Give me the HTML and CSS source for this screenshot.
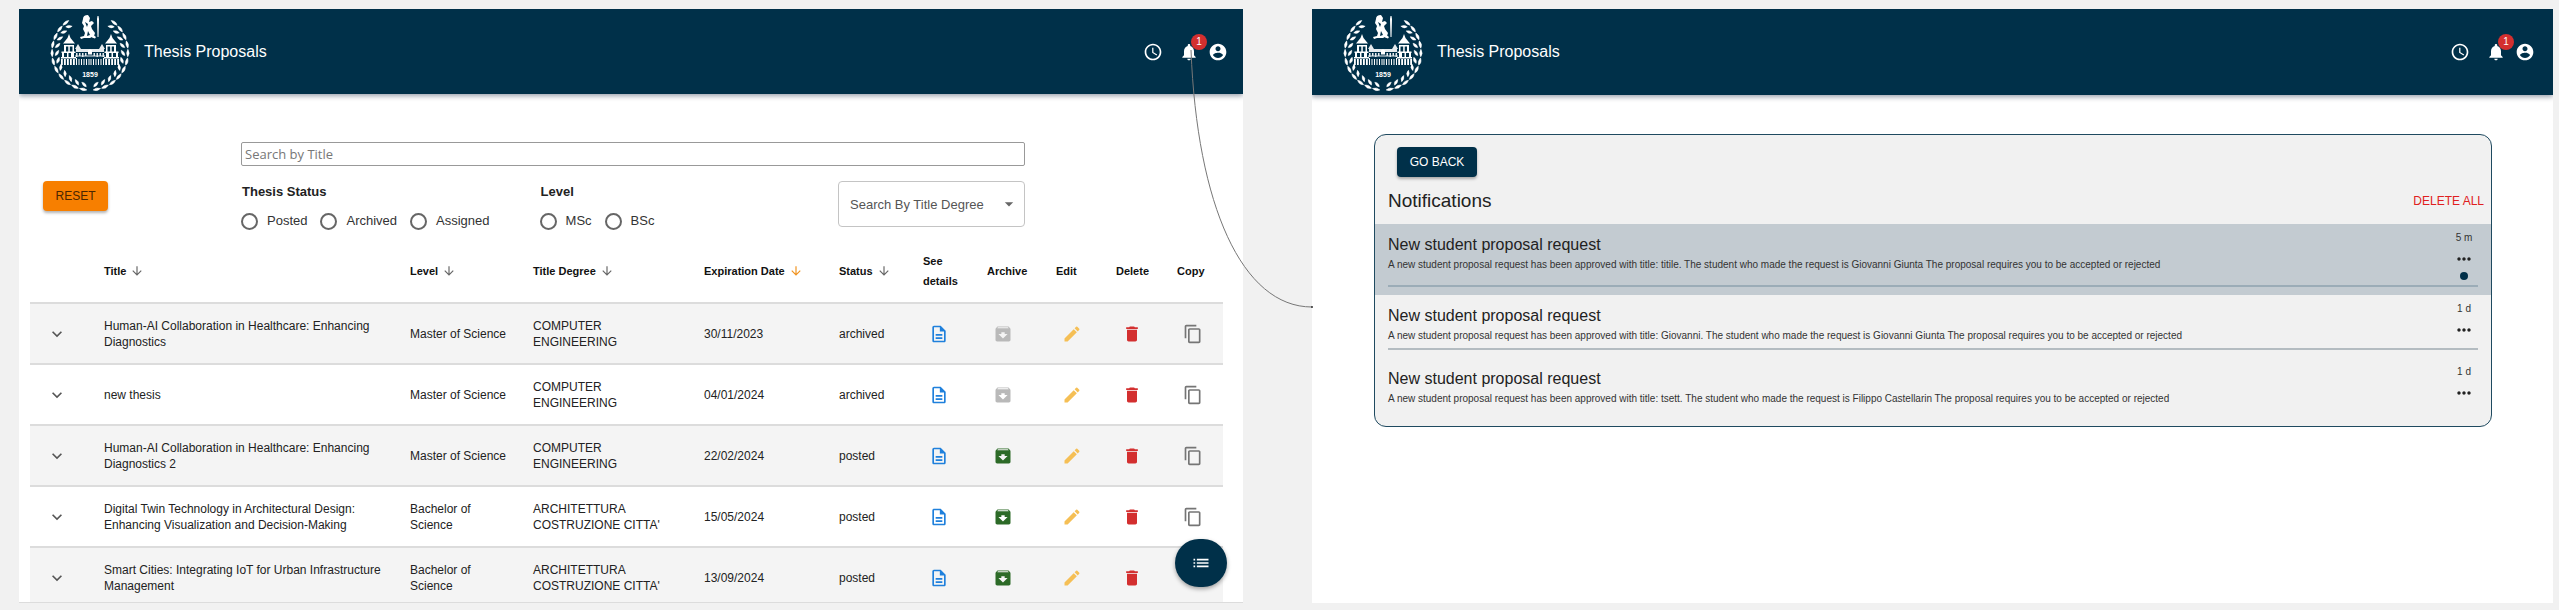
FILE: index.html
```
<!DOCTYPE html>
<html lang="en">
<head>
<meta charset="utf-8">
<title>Thesis Proposals</title>
<link rel="stylesheet" href="styles.css">
</head>
<body>
<svg class="sprite" aria-hidden="true">
  <symbol id="clock" viewBox="0 0 24 24"><path d="M11.99 2C6.47 2 2 6.48 2 12s4.47 10 9.99 10C17.52 22 22 17.52 22 12S17.52 2 11.99 2zM12 20c-4.42 0-8-3.58-8-8s3.58-8 8-8 8 3.58 8 8-3.58 8-8 8z"/><path d="M12.5 7H11v6l5.25 3.15.75-1.23-4.5-2.67z"/></symbol>
  <symbol id="bell" viewBox="0 0 24 24"><path d="M12 22c1.1 0 2-.9 2-2h-4c0 1.1.89 2 2 2zm6-6v-5c0-3.07-1.64-5.64-4.5-6.32V4c0-.83-.67-1.5-1.5-1.5s-1.5.67-1.5 1.5v.68C7.63 5.36 6 7.92 6 11v5l-2 2v1h16v-1l-2-2z"/></symbol>
  <symbol id="account" viewBox="0 0 24 24"><path d="M12 2C6.48 2 2 6.48 2 12s4.48 10 10 10 10-4.48 10-10S17.52 2 12 2zm0 3c1.66 0 3 1.34 3 3s-1.34 3-3 3-3-1.34-3-3 1.34-3 3-3zm0 14.2c-2.5 0-4.71-1.28-6-3.22.03-1.99 4-3.08 6-3.08 1.99 0 5.97 1.09 6 3.08-1.29 1.94-3.5 3.22-6 3.22z"/></symbol>
  <symbol id="arrow" viewBox="0 0 24 24"><path d="m20 12-1.41-1.41L13 16.17V4h-2v12.17l-5.58-5.59L4 12l8 8 8-8z"/></symbol>
  <symbol id="chevron" viewBox="0 0 24 24"><path d="M7.41 8.59 12 13.17l4.59-4.58L18 10l-6 6-6-6 1.41-1.41z"/></symbol>
  <symbol id="doc" viewBox="0 0 24 24"><path d="M8 16h8v2H8zm0-4h8v2H8zm6-10H6c-1.1 0-2 .9-2 2v16c0 1.1.89 2 1.99 2H18c1.1 0 2-.9 2-2V8l-6-6zm4 18H6V4h7v5h5v11z"/></symbol>
  <symbol id="archive" viewBox="0 0 24 24"><path d="M20.54 5.23l-1.39-1.68C18.88 3.21 18.47 3 18 3H6c-.47 0-.88.21-1.16.55L3.46 5.23C3.17 5.57 3 6.02 3 6.5V19c0 1.1.9 2 2 2h14c1.1 0 2-.9 2-2V6.5c0-.48-.17-.93-.46-1.27zM12 17.5L6.5 12H10v-2h4v2h3.5L12 17.5zM5.12 5l.81-1h12l.94 1H5.12z"/></symbol>
  <symbol id="edit" viewBox="0 0 24 24"><path d="M3 17.25V21h3.75L17.81 9.94l-3.75-3.75L3 17.25zM20.71 7.04c.39-.39.39-1.02 0-1.41l-2.34-2.34a.9959.9959 0 0 0-1.41 0l-1.83 1.83 3.75 3.75 1.83-1.83z"/></symbol>
  <symbol id="trash" viewBox="0 0 24 24"><path d="M6 19c0 1.1.9 2 2 2h8c1.1 0 2-.9 2-2V7H6v12zM19 4h-3.5l-1-1h-5l-1 1H5v2h14V4z"/></symbol>
  <symbol id="copy" viewBox="0 0 24 24"><path d="M16 1H4c-1.1 0-2 .9-2 2v14h2V3h12V1zm3 4H8c-1.1 0-2 .9-2 2v14c0 1.1.9 2 2 2h11c1.1 0 2-.9 2-2V7c0-1.1-.9-2-2-2zm0 16H8V7h11v14z"/></symbol>
  <symbol id="list" viewBox="0 0 24 24"><path d="M3 13h2v-2H3v2zm0 4h2v-2H3v2zm0-8h2V7H3v2zm4 4h14v-2H7v2zm0 4h14v-2H7v2zM7 7v2h14V7H7z"/></symbol>
  <symbol id="more" viewBox="0 0 24 24"><path d="M6 10c-1.1 0-2 .9-2 2s.9 2 2 2 2-.9 2-2-.9-2-2-2zm12 0c-1.1 0-2 .9-2 2s.9 2 2 2 2-.9 2-2-.9-2-2-2zm-6 0c-1.1 0-2 .9-2 2s.9 2 2 2 2-.9 2-2-.9-2-2-2z"/></symbol>
  <symbol id="caret" viewBox="0 0 24 24"><path d="m7 10 5 5 5-5z"/></symbol>
  <symbol id="leaf" viewBox="0 0 80 76" overflow="visible"><path d="M41.500 76q-3.500 2.500-7.500-.5 4-2 7.500.5zM40.500 73q-3.500 0-5-4 4.500 0 5 4z" stroke="currentColor" stroke-width=".5"/></symbol>
  <symbol id="branch" viewBox="0 0 80 76" overflow="visible">
    <g>
      <use href="#leaf" width="80" height="76" transform="rotate(7 40 38)"/>
      <use href="#leaf" width="80" height="76" transform="rotate(20 40 38)"/>
      <use href="#leaf" width="80" height="76" transform="rotate(33 40 38)"/>
      <use href="#leaf" width="80" height="76" transform="rotate(46 40 38)"/>
      <use href="#leaf" width="80" height="76" transform="rotate(59 40 38)"/>
      <use href="#leaf" width="80" height="76" transform="rotate(72 40 38)"/>
      <use href="#leaf" width="80" height="76" transform="rotate(85 40 38)"/>
      <use href="#leaf" width="80" height="76" transform="rotate(98 40 38)"/>
      <use href="#leaf" width="80" height="76" transform="rotate(111 40 38)"/>
      <use href="#leaf" width="80" height="76" transform="rotate(124 40 38)"/>
      <use href="#leaf" width="80" height="76" transform="rotate(137 40 38)"/>
    </g>
  </symbol>
  <symbol id="wing" viewBox="0 0 80 76" overflow="visible">
    <path d="M19 20l-1.500 4-4.500 5.500h12l-4.500-5.500z"/>
    <path d="M14 31h10v1.500H14zM14 32h2v6h-2zM18.300 32h1.500v6h-1.500zM22.500 32H24v6h-1.500zM11.500 37.500h14V39h-14zM12 39h2v5h-2zM17 39h1.500v5H17zM21 39h3v5h-3zM11 43h15v1.500H11z"/>
    <path d="M11 45h1.800v6H11zM14 45h1.800v6H14zM17 45h1.800v6H17zM20 45h1.800v6H20zM23 45h1.800v6H23zM26 44h1v7h-1zM28.500 45h1v6h-1zM31 45h1v6h-1zM33.500 45h1v6h-1zM36 45h1v6h-1zM38.500 45h1v6h-1z"/>
    <path d="M28 30l-3 5h6zM26 35h14v3H26zM26 39h1.500v4H26zM29 39h1.500v3H29zM32 39h1.500v4H32zM35 39h1.500v3H35zM25 41.500h15v1H25z" opacity=".9"/>
  </symbol>
  <symbol id="crest" viewBox="0 0 80 76" overflow="visible">
    <use href="#branch" width="80" height="76"/>
    <use href="#branch" width="80" height="76" transform="matrix(-1 0 0 1 80 0)"/>
    <use href="#wing" width="80" height="76"/>
    <use href="#wing" width="80" height="76" transform="matrix(-1 0 0 1 80 0)"/>
    <path d="M38 36.500q2-2 4 0v4h-4z"/>
    <path d="M33 5q0-4 5-4l2 3-1 4 3-1 2 2-3 3 1 3 3 4-1 3-4 2-6 0-3 1-1-2 4-1 1-3-2-4 1-3-2-3z"/>
    <path d="M47.500 2h1l.5 3-.5 18h-1L47 5zM42 20l4 3-1 1.500-3-1z"/>
    <path d="M35 8l3 2-1 3zM38 17l2 4-3 1z" fill="#003049"/>
  </symbol>
</svg>

<section class="screen screen-list">
  <header class="appbar">
    <svg class="crest" viewBox="0 0 80 76"><use href="#crest"/><text x="40" y="63" text-anchor="middle">1859</text></svg>
    <h1>Thesis Proposals</h1>
    <nav class="appbar-actions">
      <button class="icon-btn" aria-label="Clock"><svg class="i20"><use href="#clock"/></svg></button>
      <button class="icon-btn bell" aria-label="Notifications"><svg class="i20"><use href="#bell"/></svg><span class="badge">1</span></button>
      <button class="icon-btn" aria-label="Account"><svg class="i20"><use href="#account"/></svg></button>
    </nav>
  </header>

  <form class="filters">
    <input class="search" type="text" placeholder="Search by Title" aria-label="Search by Title">
    <button class="btn btn-reset" type="reset">RESET</button>
    <div class="filter-row">
      <fieldset>
        <legend>Thesis Status</legend>
        <div class="radios">
          <label><input type="radio" name="status">Posted</label>
          <label><input type="radio" name="status">Archived</label>
          <label><input type="radio" name="status">Assigned</label>
        </div>
      </fieldset>
      <fieldset>
        <legend>Level</legend>
        <div class="radios">
          <label><input type="radio" name="level">MSc</label>
          <label><input type="radio" name="level">BSc</label>
        </div>
      </fieldset>
      <div class="select">
        <select aria-label="Search By Title Degree"><option>Search By Title Degree</option></select>
        <svg class="i20"><use href="#caret"/></svg>
      </div>
    </div>
  </form>

  <table class="proposals">
    <colgroup><col class="c-expand"><col class="c-title"><col class="c-level"><col class="c-degree"><col class="c-date"><col class="c-status"><col class="c-see"><col class="c-archive"><col class="c-edit"><col class="c-delete"><col class="c-copy"></colgroup>
    <thead>
      <tr>
        <th></th>
        <th><span class="sort">Title<svg><use href="#arrow"/></svg></span></th>
        <th><span class="sort">Level<svg><use href="#arrow"/></svg></span></th>
        <th><span class="sort">Title Degree<svg><use href="#arrow"/></svg></span></th>
        <th><span class="sort active">Expiration Date<svg><use href="#arrow"/></svg></span></th>
        <th><span class="sort">Status<svg><use href="#arrow"/></svg></span></th>
        <th>See details</th>
        <th>Archive</th>
        <th>Edit</th>
        <th>Delete</th>
        <th>Copy</th>
      </tr>
    </thead>
    <tbody>
      <tr>
        <td><button class="expand" aria-label="Expand"><svg class="i20"><use href="#chevron"/></svg></button></td>
        <td>Human-AI Collaboration in Healthcare: Enhancing Diagnostics</td><td class="level">Master of Science</td><td class="degree">COMPUTER ENGINEERING</td><td>30/11/2023</td><td>archived</td>
        <td><button class="act see" aria-label="See details"><svg class="i20"><use href="#doc"/></svg></button></td>
        <td><button class="act archive" disabled aria-label="Archive"><svg class="i20"><use href="#archive"/></svg></button></td>
        <td><button class="act edit" aria-label="Edit"><svg class="i20"><use href="#edit"/></svg></button></td>
        <td><button class="act delete" aria-label="Delete"><svg class="i20"><use href="#trash"/></svg></button></td>
        <td><button class="act copy" aria-label="Copy"><svg class="i20"><use href="#copy"/></svg></button></td>
      </tr>
      <tr>
        <td><button class="expand" aria-label="Expand"><svg class="i20"><use href="#chevron"/></svg></button></td>
        <td>new thesis</td><td class="level">Master of Science</td><td class="degree">COMPUTER ENGINEERING</td><td>04/01/2024</td><td>archived</td>
        <td><button class="act see" aria-label="See details"><svg class="i20"><use href="#doc"/></svg></button></td>
        <td><button class="act archive" disabled aria-label="Archive"><svg class="i20"><use href="#archive"/></svg></button></td>
        <td><button class="act edit" aria-label="Edit"><svg class="i20"><use href="#edit"/></svg></button></td>
        <td><button class="act delete" aria-label="Delete"><svg class="i20"><use href="#trash"/></svg></button></td>
        <td><button class="act copy" aria-label="Copy"><svg class="i20"><use href="#copy"/></svg></button></td>
      </tr>
      <tr>
        <td><button class="expand" aria-label="Expand"><svg class="i20"><use href="#chevron"/></svg></button></td>
        <td>Human-AI Collaboration in Healthcare: Enhancing Diagnostics 2</td><td class="level">Master of Science</td><td class="degree">COMPUTER ENGINEERING</td><td>22/02/2024</td><td>posted</td>
        <td><button class="act see" aria-label="See details"><svg class="i20"><use href="#doc"/></svg></button></td>
        <td><button class="act archive" aria-label="Archive"><svg class="i20"><use href="#archive"/></svg></button></td>
        <td><button class="act edit" aria-label="Edit"><svg class="i20"><use href="#edit"/></svg></button></td>
        <td><button class="act delete" aria-label="Delete"><svg class="i20"><use href="#trash"/></svg></button></td>
        <td><button class="act copy" aria-label="Copy"><svg class="i20"><use href="#copy"/></svg></button></td>
      </tr>
      <tr>
        <td><button class="expand" aria-label="Expand"><svg class="i20"><use href="#chevron"/></svg></button></td>
        <td>Digital Twin Technology in Architectural Design: Enhancing Visualization and Decision-Making</td><td class="level">Bachelor of Science</td><td class="degree">ARCHITETTURA COSTRUZIONE CITTA'</td><td>15/05/2024</td><td>posted</td>
        <td><button class="act see" aria-label="See details"><svg class="i20"><use href="#doc"/></svg></button></td>
        <td><button class="act archive" aria-label="Archive"><svg class="i20"><use href="#archive"/></svg></button></td>
        <td><button class="act edit" aria-label="Edit"><svg class="i20"><use href="#edit"/></svg></button></td>
        <td><button class="act delete" aria-label="Delete"><svg class="i20"><use href="#trash"/></svg></button></td>
        <td><button class="act copy" aria-label="Copy"><svg class="i20"><use href="#copy"/></svg></button></td>
      </tr>
      <tr>
        <td><button class="expand" aria-label="Expand"><svg class="i20"><use href="#chevron"/></svg></button></td>
        <td>Smart Cities: Integrating IoT for Urban Infrastructure Management</td><td class="level">Bachelor of Science</td><td class="degree">ARCHITETTURA COSTRUZIONE CITTA'</td><td>13/09/2024</td><td>posted</td>
        <td><button class="act see" aria-label="See details"><svg class="i20"><use href="#doc"/></svg></button></td>
        <td><button class="act archive" aria-label="Archive"><svg class="i20"><use href="#archive"/></svg></button></td>
        <td><button class="act edit" aria-label="Edit"><svg class="i20"><use href="#edit"/></svg></button></td>
        <td><button class="act delete" aria-label="Delete"><svg class="i20"><use href="#trash"/></svg></button></td>
        <td></td>
      </tr>
    </tbody>
  </table>

  <button class="fab" aria-label="Menu"><svg class="i20"><use href="#list"/></svg></button>
</section>

<section class="screen screen-notes">
  <header class="appbar">
    <svg class="crest" viewBox="0 0 80 76"><use href="#crest"/><text x="40" y="63" text-anchor="middle">1859</text></svg>
    <h1>Thesis Proposals</h1>
    <nav class="appbar-actions">
      <button class="icon-btn" aria-label="Clock"><svg class="i20"><use href="#clock"/></svg></button>
      <button class="icon-btn bell" aria-label="Notifications"><svg class="i20"><use href="#bell"/></svg><span class="badge">1</span></button>
      <button class="icon-btn" aria-label="Account"><svg class="i20"><use href="#account"/></svg></button>
    </nav>
  </header>

  <div class="notes">
    <button class="btn btn-back">GO BACK</button>
    <div class="notes-head">
      <h2>Notifications</h2>
      <button class="delete-all">DELETE ALL</button>
    </div>
    <article class="note unread">
      <div class="note-body">
        <div class="note-text">
          <h3>New student proposal request</h3>
          <p>A new student proposal request has been approved with title: titile. The student who made the request is Giovanni Giunta The proposal requires you to be accepted or rejected</p>
        </div>
        <div class="note-side"><time>5 m</time><button aria-label="More"><svg class="i20"><use href="#more"/></svg></button><span class="dot"></span></div>
      </div>
    </article>
    <article class="note">
      <div class="note-body">
        <div class="note-text">
          <h3>New student proposal request</h3>
          <p>A new student proposal request has been approved with title: Giovanni. The student who made the request is Giovanni Giunta The proposal requires you to be accepted or rejected</p>
        </div>
        <div class="note-side"><time>1 d</time><button aria-label="More"><svg class="i20"><use href="#more"/></svg></button></div>
      </div>
    </article>
    <article class="note">
      <div class="note-body">
        <div class="note-text">
          <h3>New student proposal request</h3>
          <p>A new student proposal request has been approved with title: tsett. The student who made the request is Filippo Castellarin The proposal requires you to be accepted or rejected</p>
        </div>
        <div class="note-side"><time>1 d</time><button aria-label="More"><svg class="i20"><use href="#more"/></svg></button></div>
      </div>
    </article>
  </div>
</section>

<svg class="connector" viewBox="1180 40 140 280" aria-hidden="true">
  <path d="M1191 50C1197 205 1242 307 1312 307"/>
  <circle cx="1312" cy="307" r="1"/>
</svg>
</body>
</html>
```

FILE: styles.css
```
* { box-sizing: border-box; }

body {
  margin: 0;
  height: 100vh;
  padding: 9px 6px 7px 19px;
  display: flex;
  gap: 69px;
  position: relative;
  background: #f1f1f1;
  color: #222;
  font-family: "Liberation Sans", Arial, sans-serif;
  font-size: 13px;
}

button, input, select { font: inherit; color: inherit; }
button { border: 0; padding: 0; background: none; cursor: pointer; }
svg { display: block; fill: currentColor; }
h1, h2, h3, p { margin: 0; font-weight: 400; }

.sprite { position: absolute; width: 0; height: 0; }
.i20 { width: 20px; height: 20px; }

.screen {
  position: relative;
  min-width: 0;
  overflow: hidden;
  background: #fff;
}
.screen-list { flex: 1224 1 0; border-bottom: 1px solid #dcdcdc; }
.screen-notes { flex: 1241 1 0; }

/* App bar */
.appbar {
  display: flex;
  align-items: center;
  height: 85px;
  padding: 0 15px 0 31px;
  background: #003049;
  color: #fff;
  box-shadow: 0 2px 5px rgba(0, 20, 50, .4);
}
.screen-notes .appbar { height: 86px; padding-right: 18px; }
.crest {
  width: 80px;
  height: 76px;
  margin-right: 14px;
  overflow: visible;
  font-size: 7px;
  font-weight: 700;
}
.appbar h1 { font-size: 16px; line-height: 24px; }
.appbar-actions { display: flex; align-items: center; margin-left: auto; }
.icon-btn { position: relative; }
.icon-btn + .icon-btn { margin-left: 9px; }
.icon-btn.bell { margin-left: 16px; }
.badge {
  position: absolute;
  top: -8px;
  left: 12px;
  width: 16px;
  height: 16px;
  border-radius: 50%;
  background: #d32f2f;
  font-size: 10px;
  line-height: 16px;
  text-align: center;
}

/* Filters */
.filters {
  display: grid;
  grid-template-columns: 222fr 784fr 218fr;
  row-gap: 15px;
  padding-top: 48px;
}
.search {
  grid-column: 2;
  height: 24px;
  padding: 0 3px;
  border: 1px solid #999;
  border-radius: 2px;
  background: #fff;
  font-family: "Open Sans", sans-serif;
  font-size: 13px;
}
.search::placeholder { color: #777; opacity: 1; }
.btn {
  height: 30px;
  border-radius: 4px;
  font-size: 12px;
  box-shadow: 0 2px 3px rgba(0, 0, 0, .3);
}
.btn-reset {
  grid-column: 1;
  justify-self: start;
  width: 65px;
  margin-left: 24px;
  background: #f77f00;
  color: #4a2600;
}
.filter-row { display: flex; align-items: flex-start; }
fieldset { margin: 0 50px 0 0; padding: 0; border: 0; }
legend { padding: 0 0 0 1px; font-weight: 700; line-height: 22px; }
.radios { display: flex; gap: 13px; padding-top: 8px; }
.radios label { display: flex; align-items: center; gap: 9px; line-height: 20px; color: #333; }
.radios input {
  appearance: none;
  width: 17px;
  height: 17px;
  margin: 0;
  border: 2px solid #666;
  border-radius: 50%;
}
.select { position: relative; width: 187px; margin-left: auto; }
.select select {
  appearance: none;
  width: 100%;
  height: 46px;
  padding: 0 11px;
  border: 1px solid #c4c4c4;
  border-radius: 4px;
  background: #fff;
  color: #555;
}
.select svg { position: absolute; top: 13px; right: 6px; color: #666; pointer-events: none; }

/* Proposals table */
.proposals {
  width: calc(100% - 31px);
  margin: 8px 20px 0 11px;
  border-spacing: 0;
  table-layout: fixed;
  font-size: 12px;
  line-height: 16px;
}
.c-expand { width: 62px; }
.c-level { width: 123px; }
.c-degree { width: 171px; }
.c-date { width: 135px; }
.c-status { width: 84px; }
.c-see { width: 64px; }
.c-archive { width: 69px; }
.c-edit { width: 60px; }
.c-delete { width: 61px; }
.c-copy { width: 58px; }
.proposals th, .proposals td {
  padding: 0 4px 0 12px;
  border-bottom: 2px solid #dcdcdc;
  text-align: left;
  vertical-align: middle;
}
.proposals th { height: 65px; font-size: 11px; line-height: 20px; color: #111; }
.proposals td { height: 61px; }
.proposals td.level { padding-right: 12px; }
.proposals td.degree { padding-right: 30px; }
.proposals tbody tr:nth-child(odd) { background: #f4f4f4; }
.sort { display: inline-flex; align-items: center; gap: 4px; white-space: nowrap; }
.sort svg { width: 14px; height: 14px; color: #666; }
.sort.active svg { color: #f0921e; }
.expand { display: block; margin-left: 5px; color: #555; }
.act { display: block; margin-left: 6px; }
.see { color: #1f80dc; }
.archive { color: #2c6a27; }
.archive:disabled { color: #b9b9b9; }
.edit { color: #f5bf55; }
.delete { color: #d32f2f; }
.copy { color: #757575; }

.fab {
  position: absolute;
  right: 16px;
  bottom: 15px;
  display: grid;
  place-items: center;
  width: 52px;
  height: 48px;
  border-radius: 24px;
  background: #003049;
  color: #fff;
  box-shadow: 0 2px 4px rgba(0, 0, 0, .35);
}

/* Notifications */
.notes {
  margin: 39px 61px 0 62px;
  padding: 12px 0 5px;
  overflow: hidden;
  border: 1px solid #1f4a60;
  border-radius: 12px;
  background: #f1f1f1;
}
.btn-back { display: block; width: 80px; margin-left: 22px; background: #003049; color: #fff; }
.notes-head {
  display: flex;
  align-items: center;
  justify-content: space-between;
  height: 47px;
  padding: 0 7px 0 13px;
}
.notes-head h2 { font-size: 19px; line-height: 24px; }
.delete-all { color: #e02020; font-size: 12px; }
.note { padding: 6px 13px 8px; }
.note.unread { background: #c3cbd1; }
.note-body {
  display: flex;
  justify-content: space-between;
  min-height: 49px;
  border-bottom: 2px solid #b4bcc1;
}
.note.unread .note-body { min-height: 57px; border-color: #9bacb7; }
.note:last-child .note-body { border-color: transparent; }
.note-text { padding-top: 5px; }
.note h3 { font-size: 16px; line-height: 20px; }
.note p { font-size: 10px; line-height: 20px; color: #333; }
.note-side {
  display: flex;
  flex-direction: column;
  align-items: center;
  width: 28px;
  color: #222;
}
.note-side time { font-size: 10px; line-height: 16px; color: #333; }
.note-side .i20 { margin-top: 3px; }
.dot { width: 8px; height: 8px; margin-top: 3px; border-radius: 50%; background: #003049; }

/* Line joining the bell to the notifications screen */
.connector {
  position: absolute;
  left: 1180px;
  top: 40px;
  width: 140px;
  height: 280px;
  pointer-events: none;
  color: #333;
}
.connector path { fill: none; stroke: #777; stroke-width: 1; }
```
